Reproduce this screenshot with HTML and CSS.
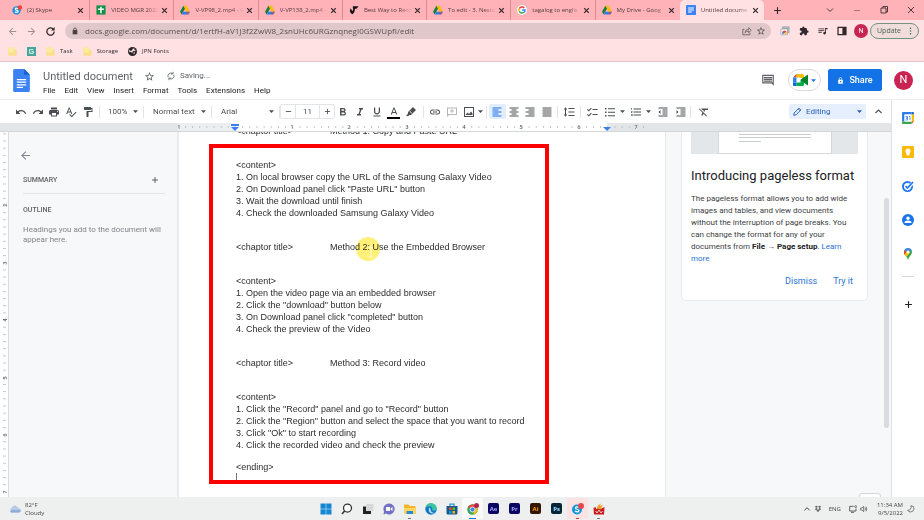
FILE: index.html
```html
<!DOCTYPE html>
<html lang="en">
<head>
<meta charset="utf-8">
<title>Untitled document</title>
<link rel="stylesheet" href="styles.css">
</head>
<body>
<svg class="defs" aria-hidden="true">
  <symbol id="x" viewBox="0 0 24 24"><path d="M4 4l16 16M20 4L4 20" fill="none" stroke="currentColor" stroke-width="4"/></symbol>
  <symbol id="plus" viewBox="0 0 24 24"><path d="M12 3v18M3 12h18" fill="none" stroke="currentColor" stroke-width="3"/></symbol>
  <symbol id="minus" viewBox="0 0 24 24"><path d="M3 12h18" fill="none" stroke="currentColor" stroke-width="3"/></symbol>
  <symbol id="caret" viewBox="0 0 10 10"><path d="M0 2.500h10L5 8z"/></symbol>
  <symbol id="back" viewBox="0 0 24 24"><path d="M20 11H7.800l5.600-5.600L12 4l-8 8 8 8 1.400-1.400L7.800 13H20z"/></symbol>
  <symbol id="fwd" viewBox="0 0 24 24"><path d="M4 11h12.200l-5.600-5.600L12 4l8 8-8 8-1.400-1.400 5.600-5.600H4z"/></symbol>
  <symbol id="drive" viewBox="0 0 24 22"><path d="M8 1h8l8 14h-8z" fill="#fbbc04"/><path d="M8 1l4 7-8 14-4-7z" fill="#188038"/><path d="M8 15h16l-4 7H4z" fill="#2f7de9"/><path d="M20 22h-4l-2-7h10z" fill="#ea4335" opacity=".5"/></symbol>
  <symbol id="folder" viewBox="0 0 24 24"><path d="M1 1h15l2 7h5v15H1z" fill="#fae08a"/><path d="M1 1h15v14H1z" fill="#fdeb9c"/></symbol>
  <symbol id="star" viewBox="0 0 24 24"><path d="M22 9.240l-7.190-.620L12 2 9.190 8.630 2 9.240l5.460 4.730L5.820 21 12 17.270 18.180 21l-1.630-7.030L22 9.240zM12 15.400l-3.760 2.270 1-4.280-3.320-2.880 4.380-.380L12 6.100l1.710 4.040 4.380.380-3.320 2.880 1 4.280L12 15.400z"/></symbol>
  <symbol id="al" viewBox="0 0 24 24"><path d="M15 15H3v2h12v-2zm0-8H3v2h12V7zM3 13h18v-2H3v2zm0 8h18v-2H3v2zM3 3v2h18V3H3z"/></symbol>
  <symbol id="docs" viewBox="0 0 32 44"><path d="M3 0h18l11 11v30q0 3-3 3H3q-3 0-3-3V3q0-3 3-3z" fill="#3b82f3"/><path d="M21 0l11 11H21z" fill="#1a5fd0"/><path d="M7 19h18v2.500H7zm0 5h18v2.500H7zm0 5h18v2.500H7zm0 5h12v2.500H7z" fill="#fff"/></symbol>
</svg>

<header class="browser">
  <div class="tabstrip">
    <nav class="tabs" aria-label="Tabs">
      <div class="tab"><svg viewBox="0 0 24 24"><circle cx="11" cy="13" r="10" fill="#1b8fe0"/><path d="M15 9q-7-3-7 1 0 2 4 3t2 4q-3 2-7-1" fill="none" stroke="#fff" stroke-width="3"/><circle cx="19" cy="6" r="5.500" fill="#ef4438"/></svg><a href="#">(2) Skype</a><button aria-label="Close tab"><svg><use href="#x"/></svg></button></div>
      <div class="tab"><svg viewBox="0 0 24 24"><path d="M1 1h22v22H1z" fill="#0f9047"/><path d="M5 10h14M12 4v16" stroke="#fff" stroke-width="3.500"/></svg><a href="#">VIDEO MGR 2022</a><button aria-label="Close tab"><svg><use href="#x"/></svg></button></div>
      <div class="tab"><svg><use href="#drive"/></svg><a href="#">V-VP98_2.mp4 - G</a><button aria-label="Close tab"><svg><use href="#x"/></svg></button></div>
      <div class="tab"><svg><use href="#drive"/></svg><a href="#">V-VP138_2.mp4 -</a><button aria-label="Close tab"><svg><use href="#x"/></svg></button></div>
      <div class="tab"><svg viewBox="0 0 24 24"><path d="M9 3h14l-5 6h-4q0 10-6 13-5-1-6-8l2-6 4 7 2-4z" fill="#111"/></svg><a href="#">Best Way to Reco</a><button aria-label="Close tab"><svg><use href="#x"/></svg></button></div>
      <div class="tab"><svg><use href="#drive"/></svg><a href="#">To edit - 3. Nesto</a><button aria-label="Close tab"><svg><use href="#x"/></svg></button></div>
      <div class="tab"><svg viewBox="0 0 24 24"><circle cx="12" cy="12" r="12" fill="#fff"/><g fill="none" stroke-width="3.500"><path d="M17.500 7A7.500 7.500 0 0 0 5.500 8.500" stroke="#ea4335"/><path d="M5.500 8.500a7.500 7.500 0 0 0 0 7" stroke="#fbbc04"/><path d="M5.500 15.500A7.500 7.500 0 0 0 17 17.500" stroke="#34a853"/><path d="M12 12h7.500q0 4-2.500 5.500" stroke="#4285f4"/></g></svg><a href="#">tagalog to englis</a><button aria-label="Close tab"><svg><use href="#x"/></svg></button></div>
      <div class="tab"><svg><use href="#drive"/></svg><a href="#">My Drive - Goog</a><button aria-label="Close tab"><svg><use href="#x"/></svg></button></div>
      <div class="tab active"><svg viewBox="0 0 24 24"><rect width="24" height="24" rx="2" fill="#3b82f3"/><path d="M5 7h14M5 12h14M5 17h9" stroke="#fff" stroke-width="2.500"/></svg><a href="#">Untitled docume</a><button aria-label="Close tab"><svg><use href="#x"/></svg></button></div>
    </nav>
    <button class="newtab" aria-label="New tab"><svg><use href="#plus"/></svg></button>
    <div class="winctl">
      <button aria-label="Search tabs"><svg viewBox="0 0 10 10"><path d="M2 3.500l3 3 3-3"/></svg></button>
      <button aria-label="Minimize"><svg viewBox="0 0 10 10"><path d="M2 5.500h6" opacity=".5"/></svg></button>
      <button aria-label="Restore"><svg viewBox="0 0 10 10"><path d="M2 3h5v5H2zM4 3V1.500h4.500V7H7"/></svg></button>
      <button aria-label="Close"><svg viewBox="0 0 10 10"><path d="M2 2l6 6M8 2L2 8"/></svg></button>
    </div>
  </div>
  <div class="navbar">
    <div class="navbtns">
      <button class="dim" aria-label="Back"><svg><use href="#back"/></svg></button>
      <button class="dim" aria-label="Forward"><svg><use href="#fwd"/></svg></button>
      <button aria-label="Reload"><svg viewBox="0 0 24 24"><path d="M20 12a8 8 0 1 1-2.500-5.800" fill="none" stroke="currentColor" stroke-width="2.800"/><path d="M21 2v8h-8z"/></svg></button>
    </div>
    <div class="omnibox">
      <svg viewBox="0 0 24 24"><path d="M5 9h14v13H5z"/><path d="M8 10V7a4 4 0 0 1 8 0v3" fill="none" stroke="currentColor" stroke-width="2.500"/></svg>
      <input aria-label="Address" value="docs.google.com/document/d/1ertfH-aV1J3f2ZwW8_2snUHc6URGznqnegI0GSWUpfI/edit">
      <button aria-label="Share page"><svg viewBox="0 0 24 24"><path d="M6 8H2v13h17v-5M7 16q1-8 9-8V4l6 6-6 6v-4q-6 0-9 4z" fill="none" stroke="currentColor" stroke-width="1.800"/></svg></button>
      <button aria-label="Bookmark"><svg><use href="#star"/></svg></button>
    </div>
    <div class="exts">
      <button aria-label="Capture"><svg viewBox="0 0 24 24"><path d="M6 2h16v14h-4V6H6z" fill="#b9c4c9" stroke="#6b7377"/><path d="M2 7h16v14H2z" fill="#eef4f5" stroke="#5e767d"/><path d="M5 17a6 6 0 0 1 11-3l-5 3z" fill="#ea4335"/><path d="M6 20a6 6 0 0 1 1-6l4 4z" fill="#4285f4"/><path d="M11 18l6-4q1 5-4 6z" fill="#fbbc04"/></svg></button>
      <button aria-label="Extensions"><svg viewBox="0 0 24 24"><path d="M20.500 11H19V7a2 2 0 0 0-2-2h-4V3.500a2.500 2.500 0 0 0-5 0V5H4a2 2 0 0 0-2 2v3.800h1.500a2.700 2.700 0 0 1 0 5.400H2V20a2 2 0 0 0 2 2h3.800v-1.500a2.700 2.700 0 0 1 5.400 0V22H17a2 2 0 0 0 2-2v-4h1.500a2.500 2.500 0 0 0 0-5z"/></svg></button>
      <button aria-label="Media"><svg viewBox="0 0 24 24"><path d="M15 6H1v2h14V6zm0 4H1v2h14v-2zM1 16h8v-2H1v2zM17 5v9.200a3.200 3.200 0 1 0 2 2.800V7.500h4V5h-6z"/></svg></button>
      <button aria-label="Side panel"><svg viewBox="0 0 24 24"><path d="M1 2h22v20H1zm3 3v14h9V5z" fill-rule="evenodd"/></svg></button>
      <button class="avatar" aria-label="Profile">N</button>
    </div>
    <button class="update">Update <svg viewBox="0 0 4 14"><circle cx="2" cy="2" r="1.300"/><circle cx="2" cy="7" r="1.300"/><circle cx="2" cy="12" r="1.300"/></svg></button>
  </div>
  <nav class="bookmarks" aria-label="Bookmarks">
    <a href="#" aria-label="Folder"><svg><use href="#folder"/></svg></a>
    <a href="#" aria-label="Notes"><svg viewBox="0 0 24 24"><path d="M0 0h24v24H0z" fill="#45a596"/><path d="M17 7H7v10h10v-5h-5" fill="none" stroke="#e7f5f2" stroke-width="2.500"/></svg></a>
    <a href="#"><svg><use href="#folder"/></svg>Task</a>
    <a href="#"><svg><use href="#folder"/></svg>Storage</a>
    <a href="#"><svg viewBox="0 0 24 24"><circle cx="12" cy="12" r="12" fill="#2b2627"/><path d="M3 7q3 4 6 3t3-5l5-2q-2 5 4 7l-5 1-3-1-1 5q-5-2-10-3zM14 15l5-1-3 6z" fill="#ffe1e4"/></svg>JPN Fonts</a>
  </nav>
</header>

<div class="docs">
  <header class="dochead">
    <svg class="logo"><use href="#docs"/></svg>
    <div class="headmain">
      <div class="titlerow">
        <input class="title" aria-label="Document title" value="Untitled document">
        <button aria-label="Star"><svg><use href="#star"/></svg></button>
        <span class="saving"><svg viewBox="0 0 24 24"><path d="M5 15a7.500 7.500 0 0 1 11-9M19 9a7.500 7.500 0 0 1-11 9M12 7h5V2M12 17H7v5" fill="none" stroke="currentColor" stroke-width="2"/></svg>Saving...</span>
      </div>
      <nav class="menu" aria-label="Menu"><button>File</button><button>Edit</button><button>View</button><button>Insert</button><button>Format</button><button>Tools</button><button>Extensions</button><button>Help</button></nav>
    </div>
    <div class="headright">
      <button class="comments" aria-label="Comments"><svg viewBox="0 0 24 24"><path d="M2 3h20v19l-4-4H2zm2 2v11h16V5zM5 7h14v2H5zm0 3h14v2H5zm0 3h14v2H5z" fill-rule="evenodd"/></svg></button>
      <button class="meet" aria-label="Meet"><svg class="cam" viewBox="0 0 30 24"><path d="M7 0h12q3 0 3 3v5h-7V7H7z" fill="#fbbc04"/><path d="M7 0v7H0z" fill="#ea4335"/><path d="M0 7h7v10H0z" fill="#2684fc"/><path d="M0 17h7v7H2q-2 0-2-2z" fill="#0066da"/><path d="M7 17h8v-5l7-6v15q0 3-3 3H7z" fill="#00ac47"/><path d="M15 12l13-10q2-1 2 1v18q0 2-2 1z" fill="#00832d"/></svg><svg class="car"><use href="#caret"/></svg></button>
      <button class="share"><svg viewBox="0 0 24 24"><path d="M4 9h16v14H4zm6 5v4h4v-4z" fill-rule="evenodd"/><path d="M8 10V6a4 4 0 0 1 8 0v3" fill="none" stroke="currentColor" stroke-width="2.500"/></svg>Share</button>
      <button class="avatar big" aria-label="Account">N</button>
    </div>
  </header>

  <div class="workspace">
    <div class="editor">
      <div class="toolbar" role="toolbar" aria-label="Formatting">
        <div class="grp first">
          <button aria-label="Undo"><svg viewBox="0 0 24 24"><path d="M12.500 8c-2.650 0-5.050.990-6.900 2.600L2 7v9h9l-3.620-3.620c1.390-1.160 3.160-1.880 5.120-1.880 3.540 0 6.550 2.310 7.600 5.500l2.370-.780C21.080 11.030 17.150 8 12.500 8z"/></svg></button>
          <button aria-label="Redo"><svg viewBox="0 0 24 24"><path d="M18.400 10.600C16.550 8.990 14.150 8 11.500 8c-4.650 0-8.580 3.030-9.960 7.220L3.900 16c1.050-3.190 4.050-5.500 7.600-5.500 1.950 0 3.730.720 5.120 1.880L13 16h9V7l-3.600 3.600z"/></svg></button>
          <button aria-label="Print"><svg viewBox="0 0 24 24"><path d="M19 8H5c-1.660 0-3 1.340-3 3v6h4v4h12v-4h4v-6c0-1.660-1.340-3-3-3zm-3 11H8v-5h8v5zm3-7a1 1 0 1 1 0-2 1 1 0 0 1 0 2zm-1-9H6v4h12V3z"/></svg></button>
          <button aria-label="Spelling"><svg viewBox="0 0 24 24"><path d="M12.450 16h2.090L9.430 3H7.570L2.460 16h2.090l1.120-3h5.640l1.140 3zm-6.020-5L8.500 5.480 10.570 11H6.430zm15.160.590l-8.090 8.090L9.830 16l-1.410 1.410 5.090 5.090L23 13l-1.410-1.410z"/></svg></button>
          <button aria-label="Paint format"><svg viewBox="0 0 24 24"><path d="M18 4V3c0-.550-.450-1-1-1H5c-.550 0-1 .450-1 1v4c0 .550.450 1 1 1h12c.550 0 1-.450 1-1V6h1v4H9v11c0 .550.450 1 1 1h2c.550 0 1-.450 1-1v-9h8V4h-3z"/></svg></button>
        </div>
        <div class="grp pick"><select aria-label="Zoom"><option>100%</option></select><svg class="car"><use href="#caret"/></svg></div>
        <div class="grp pick"><select aria-label="Style"><option>Normal text</option></select><svg class="car"><use href="#caret"/></svg></div>
        <div class="grp pick"><select aria-label="Font"><option>Arial</option></select><svg class="car"><use href="#caret"/></svg></div>
        <div class="size"><button aria-label="Decrease font size"><svg><use href="#minus"/></svg></button><input aria-label="Font size" value="11"><button aria-label="Increase font size"><svg><use href="#plus"/></svg></button></div>
        <div class="grp fmt">
          <button aria-label="Bold"><svg viewBox="0 0 24 24"><path d="M15.600 10.790c.970-.670 1.650-1.770 1.650-2.790 0-2.260-1.750-4-4-4H6v15h8c2.200 0 3.900-1.800 3.900-4 0-1.600-.9-3.400-2.300-4.210zM9 6.500h4a1.500 1.500 0 0 1 0 3H9v-3zm4.500 10H9v-3.500h4.500a1.750 1.750 0 0 1 0 3.500z"/></svg></button>
          <button aria-label="Italic"><svg viewBox="0 0 24 24"><path d="M10 4v3h2.210l-3.420 9H6v3h8v-3h-2.210l3.420-9H18V4z"/></svg></button>
          <button aria-label="Underline"><svg viewBox="0 0 24 24"><path d="M12 17c3.310 0 6-2.690 6-6V3h-2.500v8c0 1.930-1.570 3.500-3.500 3.500S8.500 12.930 8.500 11V3H6v8c0 3.310 2.690 6 6 6zm-7 2v2h14v-2H5z"/></svg></button>
          <button class="tint" aria-label="Text color"><svg viewBox="0 0 24 24"><path d="M11 3L5.500 17h2.250l1.120-3h6.250l1.120 3h2.250L13 3h-2zm-1.380 9L12 5.670 14.380 12H9.620z"/></svg></button>
          <button aria-label="Highlight"><svg viewBox="0 0 24 24"><path d="M16 2l6 6-10 10-3 0-2 2H2l4-5v-3zM9 11l4 4 1-1-4-4z" fill-rule="evenodd"/></svg></button>
        </div>
        <div class="grp ins">
          <button aria-label="Link"><svg viewBox="0 0 24 24"><path d="M3.900 12c0-1.710 1.390-3.100 3.100-3.100h4V7H7a5 5 0 0 0 0 10h4v-1.900H7c-1.710 0-3.100-1.390-3.100-3.100zM8 13h8v-2H8v2zm9-6h-4v1.900h4a3.100 3.100 0 0 1 0 6.200h-4V17h4a5 5 0 0 0 0-10z"/></svg></button>
          <button class="off" aria-label="Add comment"><svg viewBox="0 0 24 24"><path d="M2 3h20v15H6l-4 4zm2 2v11h16V5zm7 1h2v3h3v2h-3v3h-2v-3H8V9h3z" fill-rule="evenodd"/></svg></button>
          <button aria-label="Image"><svg viewBox="0 0 24 24"><path d="M2 2h20v20H2zm2 2v16h16V4zM5 18l4-5 3 3 4-5 3 4v3z" fill-rule="evenodd"/></svg></button>
          <svg class="car"><use href="#caret"/></svg>
        </div>
        <div class="grp align">
          <button class="on" aria-label="Align left"><svg><use href="#al"/></svg></button>
          <button aria-label="Align center"><svg viewBox="0 0 24 24"><path d="M7 15v2h10v-2H7zm-4 6h18v-2H3v2zm0-8h18v-2H3v2zm4-6v2h10V7H7zM3 3v2h18V3H3z"/></svg></button>
          <button aria-label="Align right"><svg viewBox="0 0 24 24"><path d="M3 21h18v-2H3v2zm6-4h12v-2H9v2zm-6-4h18v-2H3v2zm6-4h12V7H9v2zM3 3v2h18V3H3z"/></svg></button>
          <button aria-label="Justify"><svg viewBox="0 0 24 24"><path d="M3 21h18v-2H3v2zm0-4h18v-2H3v2zm0-4h18v-2H3v2zm0-4h18V7H3v2zm0-6v2h18V3H3z"/></svg></button>
        </div>
        <div class="grp spacing"><button aria-label="Line spacing"><svg viewBox="0 0 24 24"><path d="M6 7h2.500L5 2.500 1.500 7H4v10H1.500L5 21.500 8.500 17H6V7zm5-3v2h12V4H11zm0 16h12v-2H11v2zm0-7h12v-2H11v2z"/></svg></button></div>
        <div class="grp lists">
          <button aria-label="Checklist"><svg viewBox="0 0 24 24"><path d="M13 6h10v2H13zm0 10h10v2H13zM5.500 11L2 7.500l1.400-1.400 2.100 2.100 4.600-4.600L11.500 5zm0 10L2 17.500l1.400-1.400 2.100 2.100 4.600-4.600 1.400 1.400z"/></svg></button>
          <button aria-label="Bulleted list"><svg viewBox="0 0 24 24"><path d="M2 4h3v3H2zm0 7h3v3H2zm0 7h3v3H2zM8 4.500h14v2H8zm0 7h14v2H8zm0 7h14v2H8z"/></svg></button>
          <svg class="car"><use href="#caret"/></svg>
          <button aria-label="Numbered list"><svg viewBox="0 0 24 24"><path d="M2 17h2v.500H3v1h1v.500H2v1h3v-4H2v1zm1-9h1V4H2v1h1v3zm-1 3h1.800L2 13.100v.900h3v-1H3.200L5 10.900V10H2v1zm5-6v2h15V5H7zm0 14h15v-2H7v2zm0-6h15v-2H7v2z"/></svg></button>
          <svg class="car"><use href="#caret"/></svg>
          <button aria-label="Decrease indent"><svg viewBox="0 0 24 24"><path d="M11 17h10v-2H11v2zm-8-5l4 4V8l-4 4zm0 9h18v-2H3v2zM3 3v2h18V3H3zm8 6h10V7H11v2zm0 4h10v-2H11v2z"/></svg></button>
          <button aria-label="Increase indent"><svg viewBox="0 0 24 24"><path d="M3 21h18v-2H3v2zM3 8v8l4-4-4-4zm8 9h10v-2H11v2zM3 3v2h18V3H3zm8 6h10V7H11v2zm0 4h10v-2H11v2z"/></svg></button>
        </div>
        <div class="grp clear"><button aria-label="Clear formatting"><svg viewBox="0 0 24 24"><path d="M3.270 5L2 6.270l6.970 6.970L6.500 19h3l1.570-3.660L16.730 21 18 19.730 3.550 5.270 3.270 5zM6 5v.180L8.820 8h2.400l-.720 1.680 2.100 2.100L14.210 8H20V5H6z"/></svg></button></div>
        <div class="mode"><svg viewBox="0 0 24 24"><path d="M2 22l1-6L16 3l5 5L8 21zM14 5l5 5" fill="none" stroke="currentColor" stroke-width="2.500"/></svg><select aria-label="Mode"><option>Editing</option></select><svg class="car"><use href="#caret"/></svg></div>
        <button class="collapse" aria-label="Hide menus"><svg viewBox="0 0 24 24"><path d="M4 16l8-8 8 8" fill="none" stroke="currentColor" stroke-width="3"/></svg></button>
      </div>

      <div class="ruler">
        <svg viewBox="0 0 470 8">
          <defs><pattern id="ticks" x="57" width="7.160" height="8" patternUnits="userSpaceOnUse"><path d="M.5 3v2" stroke="#c0c4c9" stroke-width="1"/></pattern></defs>
          <rect width="57" height="8" fill="#eceff1"/><rect x="57" width="372" height="8" fill="#fff"/>
          <rect width="470" height="8" fill="url(#ticks)"/>
          <g text-anchor="middle"><text x="1" y="6">1</text><text x="114" y="6">1</text><text x="171" y="6">2</text><text x="229" y="6">3</text><text x="286" y="6">4</text><text x="343" y="6">5</text><text x="401" y="6">6</text><text x="458" y="6">7</text></g>
          <path d="M53 1h8v2h-8zM53 4h8l-4 4zM425 4h8l-4 4z" fill="#3d7ff0"/>
        </svg>
      </div>

      <div class="canvas">
        <div class="vruler">
          <svg viewBox="0 0 9 365">
            <defs><pattern id="vticks" y="73" width="9" height="7.160" patternUnits="userSpaceOnUse"><path d="M3 .500h3" stroke="#c3c7ca"/></pattern></defs>
            <rect width="9" height="365" fill="url(#vticks)"/>
            <g text-anchor="middle"><text transform="translate(7 73) rotate(-90)">2</text><text transform="translate(7 131) rotate(-90)">3</text><text transform="translate(7 188) rotate(-90)">4</text><text transform="translate(7 246) rotate(-90)">5</text><text transform="translate(7 303) rotate(-90)">6</text><text transform="translate(7 360) rotate(-90)">7</text></g>
          </svg>
        </div>
        <aside class="outline">
          <button class="close" aria-label="Close outline"><svg><use href="#back"/></svg></button>
          <div class="sum"><h2>SUMMARY</h2><button aria-label="Add summary"><svg><use href="#plus"/></svg></button></div>
          <h2>OUTLINE</h2>
          <p>Headings you add to the document will appear here.</p>
        </aside>
        <main class="page">
          <div class="chapter"><span>&lt;chaptor title&gt;</span><span>Method 1: Copy and Paste URL</span></div>
          <div class="block"><p>&lt;content&gt;</p><p>1. On local browser copy the URL of the Samsung Galaxy Video</p><p>2. On Download panel click "Paste URL" button</p><p>3. Wait the download until finish</p><p>4. Check the downloaded Samsung Galaxy Video</p></div>
          <div class="chapter"><span>&lt;chaptor title&gt;</span><span>Method 2: Use the Embedded Browser</span></div>
          <div class="block"><p>&lt;content&gt;</p><p>1. Open the video page via an embedded browser</p><p>2. Click the "download" button below</p><p>3. On Download panel click "completed" button</p><p>4. Check the preview of the Video</p></div>
          <div class="chapter"><span>&lt;chaptor title&gt;</span><span>Method 3: Record video</span></div>
          <div class="block"><p>&lt;content&gt;</p><p>1. Click the "Record" panel and go to "Record" button</p><p>2. Click the "Region" button and select the space that you want to record</p><p>3. Click "Ok" to start recording</p><p>4. Click the recorded video and check the preview</p></div>
          <div class="ending"><p>&lt;ending&gt;</p><i class="cursor"></i></div>
          <div class="frame"></div>
          <div class="pointer"><svg viewBox="0 0 6 12"><path d="M1 1h4M3 1v10M1 11h4" stroke="#fffbd0" fill="none"/></svg></div>
        </main>
        <aside class="promo">
          <section class="card">
            <div class="art"><div class="sheet"><hr><hr><hr></div></div>
            <h1>Introducing pageless format</h1>
            <p>The pageless format allows you to add wide images and tables, and view documents without the interruption of page breaks. You can change the format for any of your documents from <b>File</b> → <b>Page setup</b>. <a href="#">Learn more</a></p>
            <div class="acts"><button>Dismiss</button><button>Try it</button></div>
          </section>
          <div class="thumb"></div>
          <button class="explore" aria-label="Explore"></button>
        </aside>
      </div>
    </div>

    <nav class="side" aria-label="Side panel">
      <button aria-label="Calendar"><svg viewBox="0 0 24 24"><path d="M0 2q0-2 2-2h17v5H5v14H0z" fill="#2f7de9"/><path d="M19 0h3q2 0 2 2v3h-5z" fill="#1967d2"/><path d="M19 5h5v14h-5z" fill="#fbbc04"/><path d="M0 19h19v5H2q-2 0-2-2z" fill="#34a853"/><path d="M19 19h5l-5 5z" fill="#ea4335"/><path d="M5 5h14v14H5z" fill="#fff"/><path d="M7 9h4v3H8h3v4H7M14 9h2v7" fill="none" stroke="#2f7de9" stroke-width="1.500"/></svg></button>
      <button aria-label="Keep"><svg viewBox="0 0 24 24"><rect width="24" height="24" rx="2" fill="#fbb904"/><circle cx="12" cy="10" r="5" fill="#fff"/><path d="M9 14h6v5H9z" fill="#fff"/></svg></button>
      <button aria-label="Tasks"><svg viewBox="0 0 24 24"><circle cx="11" cy="13" r="9" fill="none" stroke="#2079ee" stroke-width="4"/><path d="M6 12l5 5L22 5" fill="none" stroke="#fff" stroke-width="6"/><path d="M7 12l4 4L22 4" fill="none" stroke="#2079ee" stroke-width="3.500"/></svg></button>
      <button aria-label="Contacts"><svg viewBox="0 0 24 24"><circle cx="12" cy="12" r="12" fill="#1a73e8"/><circle cx="12" cy="8.500" r="3.500" fill="#fff"/><path d="M5 17q0-4 7-4t7 4v1H5z" fill="#fff"/></svg></button>
      <button aria-label="Maps"><svg viewBox="0 0 24 24"><path d="M12 0q8 1 8 8 0 4-4 8-3 4-4 8-1-4-4-8-4-4-4-8 0-7 8-8z" fill="#34a853"/><path d="M5 4q3-4 7-4 5 0 7 4l-7 4z" fill="#4285f4"/><path d="M5 4l5 4-5 6Q3 9 5 4z" fill="#ea4335"/><path d="M5 13l7-8 4 4-7 9z" fill="#fbbc04"/><circle cx="12" cy="8" r="3" fill="#fff"/></svg></button>
      <hr>
      <button class="add" aria-label="Get add-ons"><svg><use href="#plus"/></svg></button>
    </nav>
  </div>
</div>

<footer class="taskbar">
  <div class="weather"><svg viewBox="0 0 24 16"><path d="M5 15a5 5 0 0 1 0-9q2-6 8-5 4 1 5 5 6 0 6 5 0 4-4 4z" fill="#b7cbe9"/><path d="M2 13q6-6 12-2 6-3 9 1-1 3-4 3H5q-2 0-3-2z" fill="#8eacd8"/></svg><div><b>82°F</b><span>Cloudy</span></div></div>
  <div class="apps">
    <button aria-label="Start"><svg viewBox="0 0 24 24"><path d="M1 1h10.500v10.500H1zM12.500 1H23v10.500H12.500zM1 12.500h10.500V23H1zM12.500 12.500H23V23H12.500z" fill="#1387d4"/></svg></button>
    <button aria-label="Search"><svg viewBox="0 0 24 24"><circle cx="13" cy="10" r="8" fill="#fafafa" stroke="#333" stroke-width="2.500"/><path d="M7 16l-5 6" stroke="#333" stroke-width="3"/></svg></button>
    <button aria-label="Task view"><svg viewBox="0 0 24 24"><path d="M2 7h16v15H2z" fill="#222"/><path d="M8 2h15v14H8z" fill="#d8d8d8"/></svg></button>
    <button aria-label="Chat"><svg viewBox="0 0 24 24"><path d="M12 1a11 11 0 1 1-6 20l-5 2 1-6A11 11 0 0 1 12 1z" fill="#7472c4"/><path d="M6 8h8v8H6zM15 11l4-3v8l-4-3z" fill="#fff"/></svg></button>
    <button class="run" aria-label="Explorer"><svg viewBox="0 0 24 24"><path d="M0 3h9l3 3h11v16H0z" fill="#f5b52c"/><path d="M0 10h23v12H0z" fill="#fbd65e"/><path d="M5 16h13v6H5z" fill="#2d87d6"/></svg></button>
    <button aria-label="Edge"><svg viewBox="0 0 24 24"><circle cx="12" cy="12" r="11.500" fill="#1479c9"/><path d="M1 10Q3 0 12 .500q11 1 11 10 0 5-7 5-3-1-1-4 0-5-6-5Q3 6 1 10z" fill="#3cc6a0"/><path d="M9 9q-4 9 5 12l6-1q-10-1-9-9z" fill="#bde9f5"/></svg></button>
    <button aria-label="Store"><svg viewBox="0 0 24 24"><path d="M1 6h22v14q0 3-3 3H4q-3 0-3-3z" fill="#17588f"/><path d="M8 6V2h8v4" fill="none" stroke="#2b94cf" stroke-width="2.500"/><path d="M6 9h5v5H6z" fill="#f25022"/><path d="M13 9h5v5h-5z" fill="#7fba00"/><path d="M6 16h5v5H6z" fill="#00a4ef"/><path d="M13 16h5v5h-5z" fill="#ffb900"/></svg></button>
    <button class="current" aria-label="Chrome"><svg viewBox="0 0 24 24"><circle cx="11" cy="13" r="10.500" fill="#34a853"/><path d="M2 8a10.500 10.500 0 0 1 18 0l-9 5z" fill="#ea4335"/><path d="M20 8q4 12-8 15.500l3-10.500z" fill="#fbbc04"/><circle cx="11" cy="13" r="5" fill="#4285f4" stroke="#fff" stroke-width="1.500"/><circle cx="19" cy="5" r="5" fill="#b9224d"/></svg></button>
    <button class="adobe violet">Ae</button>
    <button class="adobe violet">Pr</button>
    <button class="adobe amber">Ai</button>
    <button class="adobe teal">Ps</button>
    <button class="run alert" aria-label="Skype"><svg viewBox="0 0 24 24"><circle cx="10" cy="13" r="10" fill="#1296dc"/><path d="M14 9q-7-3-7 1 0 2 4 3t2 4q-3 2-7-1" fill="none" stroke="#fff" stroke-width="2.500"/><circle cx="18" cy="6" r="6" fill="#e5484d"/></svg></button>
    <button class="run" aria-label="Recorder"><svg viewBox="0 0 24 24"><path d="M1 10l4-2 2 5 4-6 4 5 8-4-1 15H2z" fill="#c71a1a"/><path d="M8 11q0-7 8-10l-2 5 6-2-5 9z" fill="#f0a02a"/><path d="M5 16l3 4 4-6 4 6 3-4" fill="none" stroke="#fff" stroke-width="1.500"/></svg></button>
  </div>
  <div class="tray">
    <svg viewBox="0 0 24 24"><path d="M4 16l8-8 8 8" fill="none" stroke="currentColor" stroke-width="3"/></svg>
    <svg viewBox="0 0 24 24"><path d="M7 2l5 3.500L7 9 2 5.500zM17 2l5 3.500L17 9l-5-3.500zM7 9l5 3.500L7 16l-5-3.500zM17 9l5 3.500-5 3.500-5-3.500zM12 14l5 3.500-5 3.500-5-3.500z" fill="#666"/></svg>
    <span class="lang">ENG</span>
    <svg viewBox="0 0 24 24"><path d="M14 4H2v14h19v-7M6 22h9" fill="none" stroke="currentColor" stroke-width="2.500"/><circle cx="20" cy="5" r="3" fill="none" stroke="currentColor" stroke-width="2"/></svg>
    <svg viewBox="0 0 24 24"><path d="M2 9h4l5-5v16l-5-5H2zM15 8q3 4 0 8M18 5q5 7 0 14" fill="none" stroke="currentColor" stroke-width="2"/></svg>
    <div class="clock"><time>11:34 AM</time><time>9/5/2022</time></div>
    <svg viewBox="0 0 24 24"><path d="M12 2q10 1 9 10-2 9-11 9-6-1-8-5 12 0 10-14z" fill="none" stroke="currentColor" stroke-width="2"/></svg>
  </div>
</footer>
</body>
</html>
```
FILE: styles.css
```css
* { box-sizing: border-box; }
html, body { height: 100%; }
body {
  margin: 0;
  display: flex;
  flex-direction: column;
  overflow: hidden;
  font-family: Roboto, "Liberation Sans", sans-serif;
  font-size: 8px;
  line-height: 12px;
  color: #3c4043;
  background: #fff;
}
p, h1, h2 { margin: 0; }
a { color: inherit; text-decoration: none; }
button, input, select {
  font: inherit;
  color: inherit;
  border: 0;
  padding: 0;
  margin: 0;
  background: none;
  appearance: none;
  outline: 0;
}
button { display: flex; align-items: center; justify-content: center; }
svg { display: block; flex: none; width: 10px; height: 10px; fill: currentColor; }
.defs { position: absolute; width: 0; height: 0; }
svg.car { width: 5px; height: 5px; }

/* Browser window */
.browser {
  flex: none;
  font-family: "Open Sans", "Noto Sans", sans-serif;
  font-size: 6px;
  color: #2f2729;
  background: #ffe1e4;
  border-bottom: 1px solid #e5c3c7;
}
.tabstrip { display: flex; align-items: center; height: 20px; background: #ffb2b8; }
.tabs { display: grid; grid-template-columns: repeat(9, 1fr); flex: 1; max-width: 764px; padding-left: 6px; height: 20px; }
.tab { display: flex; align-items: center; min-width: 0; padding: 0 5px 0 6px; position: relative; }
.tab a {
  flex: 1;
  min-width: 0;
  overflow: hidden;
  white-space: nowrap;
  margin: 0 2px 0 5px;
  color: #4e3b3e;
  mask-image: linear-gradient(90deg, #000 75%, transparent);
}
.tab button svg { width: 7px; height: 7px; }
.tab:nth-child(-n+7) { border-right: 1px solid #d58e94; background-clip: padding-box; }
.tab.active { background: #ffe1e4; border-radius: 5px 5px 0 0; }
.newtab { width: 26px; }
.newtab svg { width: 9px; height: 9px; }
.winctl { display: flex; margin-left: auto; }
.winctl button { width: 27px; }
.winctl svg { fill: none; stroke: #4c3b3d; stroke-width: 1; }
.navbar { display: flex; align-items: center; height: 22px; padding-right: 5px; }
.navbtns { display: flex; width: 65px; padding-left: 3px; }
.navbtns button { width: 19px; }
.navbtns svg { width: 11px; height: 11px; }
.dim { color: #a08d90; }
.omnibox {
  display: flex;
  align-items: center;
  flex: 1;
  height: 16px;
  padding: 0 6px;
  border-radius: 8px;
  color: #5a4f51;
  background: #e0c8ca;
}
.omnibox > svg { width: 8px; height: 8px; color: #4a4042; margin-right: 6px; }
.omnibox input { flex: 1; min-width: 0; font-size: 8px; }
.omnibox button { width: 19px; }
.omnibox button:last-child { width: 9px; }
.exts { display: flex; align-items: center; width: 99px; padding: 0 2px 0 4px; }
.exts button { width: 19px; }
.exts .avatar { width: 14px; height: 14px; margin-left: 3px; font-size: 7px; }
.avatar { border-radius: 50%; color: #fff; background: #c92552; font-family: Roboto, sans-serif; }
.update { height: 16px; width: 49px; gap: 8px; border: 1px solid #75917f; border-radius: 8px; color: #47624f; background: #efdcdb; font-size: 7px; }
.update svg { width: 3px; height: 8px; }
.bookmarks { display: flex; align-items: center; height: 18px; margin-bottom: 1px; gap: 10px; padding-left: 8px; }
.bookmarks a { display: flex; align-items: center; gap: 5px; }
.bookmarks svg { width: 9px; height: 9px; }

/* Document header */
.docs { flex: 1; min-height: 0; display: flex; flex-direction: column; background: #fff; }
.dochead { flex: none; display: flex; height: 38px; padding: 6px 11px 0 13px; border-bottom: 1px solid #f0f0f0; }
.logo { width: 17px; height: 23px; margin-top: 1px; }
.headmain { flex: 1; margin-left: 13px; }
.titlerow { display: flex; align-items: center; height: 16px; }
.title { width: 100px; font-size: 11px; color: #5f6368; line-height: 15px; }
.titlerow button { width: 13px; color: #5f6368; }
.titlerow button svg { width: 11px; height: 11px; }
.saving { display: flex; align-items: center; gap: 4px; margin-left: 10px; color: #5f6368; }
.menu { display: flex; gap: 9px; font-size: 8px; color: #202124; margin-top: 1px; }
.headright { display: flex; align-items: center; height: 24px; }
.comments { width: 14px; margin-right: 13px; color: #5f6368; }
.comments svg { width: 14px; height: 14px; }
.meet { width: 33px; height: 22px; gap: 3px; margin-right: 7px; border: 1px solid #dadce0; border-radius: 11px; color: #1a73e8; }
.meet .cam { width: 15px; height: 12px; }
.share { width: 54px; height: 22px; gap: 5px; border-radius: 2px; color: #fff; background: #1372e6; font-size: 9px; font-weight: 500; }
.share svg { width: 7px; height: 7px; }
.avatar.big { width: 19px; height: 19px; margin-left: 12px; font-size: 11px; }

/* Toolbar */
.workspace { flex: 1; min-height: 0; display: flex; }
.editor { flex: 1; min-width: 0; display: flex; flex-direction: column; }
.toolbar { flex: none; display: flex; align-items: center; height: 23px; color: #4b4f53; }
.toolbar button svg { width: 12px; height: 12px; }
.grp { display: flex; align-items: center; border-right: 1px solid #e3e5e8; height: 12px; }
.grp button { flex: 1; height: 14px; }
.grp .car { margin: 0 3px 0 1px; }
.first { width: 100px; padding: 0 3px 0 13px; }
.pick { justify-content: space-between; width: 68px; padding: 0 2px 0 9px; }
.first + .pick { width: 44px; padding-left: 8px; }
.size { display: flex; width: 55px; height: 15px; border: 1px solid #e3e5e8; border-radius: 2px; }
.size input { width: 25px; text-align: center; border: 1px solid #e3e5e8; border-width: 0 1px; }
.size button { flex: 1; }
.size button svg { width: 7px; height: 7px; }
.fmt { width: 89px; padding-right: 4px; }
.tint { flex-direction: column; position: relative; }
.tint::after { content: ""; position: absolute; left: 2px; right: 2px; bottom: 0; height: 2px; background: #000; }
.ins { width: 63px; padding-left: 2px; }
.off { opacity: .4; }
.align { width: 71px; padding: 0 2px; }
.grp .on { height: 15px; border-radius: 2px; color: #1a73e8; background: #e3edfd; }
.spacing { width: 23px; }
.lists { width: 110px; padding-left: 2px; }
.clear { width: 25px; border: 0; }
.mode { display: flex; align-items: center; justify-content: space-between; width: 77px; height: 15px; margin-left: auto; padding: 0 4px; border-radius: 2px; color: #2860b8; background: #e6effd; }
.mode select { flex: 1; margin-left: 4px; }
.mode svg:first-child { width: 9px; height: 9px; }
.collapse { width: 25px; }
.toolbar .collapse svg { width: 9px; height: 9px; }

.ruler { flex: none; height: 9px; padding-left: 178px; background: #e3e6e9; border-bottom: 1px solid #d4d7da; overflow: hidden; }
.ruler svg { width: 470px; height: 8px; }
.ruler text, .vruler text { font-size: 6px; fill: #5f6368; }

/* Canvas */
.canvas { flex: 1; min-height: 0; display: flex; background: #f7f8f9; overflow: hidden; }
.vruler { flex: none; width: 9px; background: #fff; border-right: 1px solid #dadce0; overflow: hidden; }
.vruler svg { width: 9px; height: 365px; }
.outline { flex: none; width: 170px; padding: 17px 12px 0 14px; color: #80868b; border-right: 2px solid #e9ebed; }
.outline .close { width: 13px; margin-left: -4px; }
.outline .close svg { width: 13px; height: 13px; }
.outline h2 { font-size: 7px; font-weight: 500; line-height: 12px; color: #5f6368; }
.sum { display: flex; justify-content: space-between; align-items: center; height: 32px; margin-bottom: 10px; padding: 4px 6px 0 0; border-bottom: 1px solid #e3e5e8; color: #5f6368; }
.sum svg { width: 8px; height: 8px; }
.outline p { line-height: 10px; margin-top: 9px; font-size: 8px; }
.page {
  flex: 1;
  min-width: 0;
  position: relative;
  overflow: hidden;
  background: #fff;
  padding-left: 57px;
  font-family: "Liberation Sans", Arial, sans-serif;
  font-size: 9px;
  color: #2d2d2d;
  white-space: nowrap;
}
.chapter { display: grid; grid-template-columns: 94px 1fr; }
.chapter:first-child { margin-top: -7px; }
.block { margin: 22px 0; }
.ending { margin-top: -12px; }
.cursor { display: block; width: 1px; height: 8px; background: #777; }
.frame { position: absolute; left: 30px; top: 12px; width: 340px; height: 340px; border: 4px solid #fe0000; }
.pointer { position: absolute; left: 177px; top: 105px; width: 24px; height: 24px; border-radius: 50%; background: #fff07a; mix-blend-mode: multiply; }
.pointer svg { width: 6px; height: 12px; margin: 9px 0 0 12px; }

.promo { flex: none; position: relative; width: 226px; padding-left: 15px; border-left: 1px solid #e6e8ea; }
.card { width: 187px; padding: 0 9px 13px; border: 1px solid #e8eaed; border-top: 0; border-radius: 0 0 5px 5px; background: #fff; }
.art { display: flex; justify-content: center; height: 22px; background: #e4e7ea; }
.sheet { width: 114px; padding: 2px 20px; background: #fff; border: 1px solid #d5d8dc; border-width: 0 1px 1px; }
.sheet hr { height: 1px; margin: 0 0 2px; border: 0; background: #c9ccd0; }
.sheet hr:last-child { width: 22px; margin-top: 3px; }
.card h1 { font-size: 13px; font-weight: 400; line-height: 16px; margin: 14px 0 9px; color: #202124; white-space: nowrap; }
.card p { color: #3c4043; }
.card b { font-weight: 700; color: #202124; }
.card a, .acts { color: #2b73d4; }
.acts { display: flex; justify-content: flex-end; gap: 16px; margin-top: 10px; padding-right: 5px; font-size: 9px; }
.thumb { position: absolute; right: 2px; top: 66px; width: 5px; height: 230px; border-radius: 3px; background: #d9dbdf; }
.explore { position: absolute; right: 10px; bottom: 0; width: 22px; height: 4px; border: 1px solid #d5d8db; border-bottom: 0; border-radius: 3px 3px 0 0; background: #fff; }

.side { flex: none; display: flex; flex-direction: column; align-items: center; width: 33px; padding-top: 6px; gap: 11px; border-left: 1px solid #dfe1e4; background: #fff; }
.side button { width: 23px; height: 23px; }
.side svg { width: 12px; height: 12px; }
.side hr { width: 12px; height: 1px; margin: 0 0 5px; border: 0; background: #d5d7da; }
.side .add { color: #202124; }
.side .add svg { width: 9px; height: 9px; }

/* Taskbar */
.taskbar {
  flex: none;
  display: grid;
  grid-template-columns: 1fr auto 1fr;
  align-items: center;
  height: 23px;
  padding: 0 9px;
  font-family: "Open Sans", "Noto Sans", sans-serif;
  font-size: 6px;
  line-height: 8px;
  color: #444;
  background: #eeefef;
}
.weather { display: flex; align-items: center; gap: 4px; }
.weather svg { width: 12px; height: 8px; }
.weather b, .weather span { display: block; font-weight: 400; }
.apps { display: grid; grid-template-columns: repeat(14, 21px); height: 21px; }
.apps button { position: relative; }
.apps svg { width: 12px; height: 12px; }
.run::after, .current::after { content: ""; position: absolute; bottom: 0; left: 9px; width: 3px; height: 1px; background: #777; }
.current { background: #fafafa; border-radius: 2px; }
.current::after { left: 7px; width: 7px; background: #1676c4; }
.alert { background: #fae3e2; }
.alert::after { background: #c33; }
.apps .adobe { width: 11px; height: 11px; align-self: center; justify-self: center; border-radius: 2px; font-size: 6px; font-weight: 700; }
.violet { color: #a9a4ff; background: #0a0760; }
.amber { color: #ff9a1f; background: #331703; }
.teal { color: #9fe0ff; background: #062538; }
.tray { display: flex; align-items: center; justify-content: flex-end; gap: 3px; }
.tray svg { width: 8px; height: 8px; }
.lang { margin: 0 5px 0 4px; }
.clock { margin: 0 1px 0 6px; text-align: right; }
.clock time { display: block; }
```
